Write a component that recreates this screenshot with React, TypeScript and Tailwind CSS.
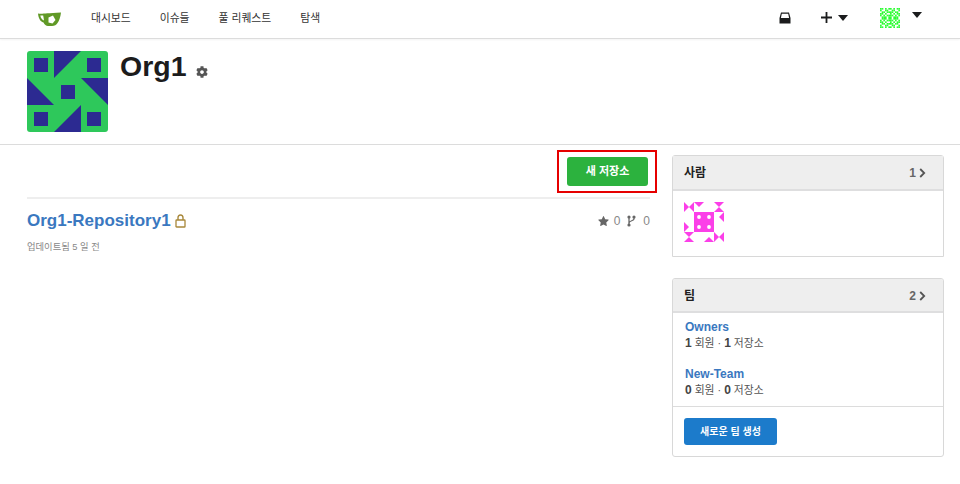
import { GoStarFill } from 'react-icons/go';
import { FaCog } from 'react-icons/fa';

const font = "font-['Liberation_Sans','Noto_Sans_CJK_KR',sans-serif]";

const navItems = ['대시보드', '이슈들', '풀 리퀘스트', '탐색'];

function Logo() {
  return (
    <svg width="23" height="14" viewBox="0 0 23 14">
      <path d="M0 1.5 C4 2 6 1.5 23 0.5 C22.5 5 21 9 19.5 11 C18.5 13 16.5 14 14 14 L10 14 C8 14 6.5 12.5 5.5 10.5 C2 9.5 0.5 6 0 1.5Z" fill="#609926" />
      <path d="M2.3 3.6 L5.2 3.6 L6 8.6 C3.8 7.8 2.8 6 2.3 3.6Z" fill="#fff" />
      <path d="M10.5 5.5 L15 3.5 L17.5 8 L14.5 11.5 L10.5 10.5Z" fill="#fff" />
    </svg>
  );
}

function InboxIcon() {
  return (
    <svg width="12" height="12" viewBox="0 0 12 12">
      <path d="M2 0.6 H10 L11.5 6 V11.4 H0.5 V6Z M2.8 1.8 L1.9 6 H10.1 L9.2 1.8Z" fill="#1b1c1d" fillRule="evenodd" />
    </svg>
  );
}

function Caret({ className }: { className: string }) {
  return (
    <svg className={className} width="10" height="6" viewBox="0 0 10 6">
      <path d="M0 0 H10 L5 6Z" fill="#1b1c1d" />
    </svg>
  );
}

function OrgAvatar() {
  const squares = [[7, 7], [60, 7], [34, 34], [7, 61], [60, 61]];
  return (
    <svg className="rounded-[3px] shrink-0" width="81" height="81" viewBox="0 0 81 81">
      <rect width="81" height="81" fill="#2ec85b" />
      {squares.map(([x, y]) => (
        <rect key={`${x}-${y}`} x={x} y={y} width="14" height="14" fill="#2c2a91" />
      ))}
      <path d="M27 0 H54 L27 27Z M54 27 H81 V54Z M54 54 V81 H27Z M0 27 L27 54 H0Z" fill="#2c2a91" />
    </svg>
  );
}

function UserAvatar() {
  const dots = [[15, 15], [25, 15], [15, 25], [25, 25]];
  const triangles = [
    '0,0 5,5 0,10', '10,0 5,5 10,10',
    '10,0 20,0 15,5',
    '30,0 40,0 35,5', '30,10 40,10 35,5',
    '40,10 40,20 35,15',
    '40,30 35,35 40,40', '30,30 35,35 30,40',
    '30,40 20,40 25,35',
    '0,30 10,30 5,35', '0,40 10,40 5,35',
    '0,30 0,20 5,25',
  ];
  return (
    <svg width="40" height="40" viewBox="0 0 40 40">
      <rect x="10" y="10" width="20" height="20" fill="#fb3fe8" />
      {triangles.map((points) => (
        <polygon key={points} points={points} fill="#fb3fe8" />
      ))}
      {dots.map(([x, y]) => (
        <circle key={`${x}-${y}`} cx={x} cy={y} r="1.9" fill="#fff" />
      ))}
    </svg>
  );
}

function NavAvatar() {
  // 12x12 mirrored noise
  const rows = ['110101101011', '100110011001', '011011110110', '110100101011', '101011110101', '011101101110'];
  const cells: [number, number][] = [];
  rows.forEach((row, y) => {
    row.split('').forEach((c, x) => {
      if (c === '1') {
        cells.push([x, y], [x, 11 - y]);
      }
    });
  });
  return (
    <svg className="block" width="20" height="20" viewBox="0 0 12 12">
      {cells.map(([x, y]) => (
        <rect key={`${x}-${y}`} x={x} y={y} width="1" height="1" fill="#2dfc34" />
      ))}
    </svg>
  );
}

function Chevron() {
  return (
    <svg width="7" height="10" viewBox="0 0 7 10">
      <path d="M1.2 1 L5.2 5 L1.2 9" fill="none" stroke="#555" strokeWidth="1.8" />
    </svg>
  );
}

function LockIcon() {
  return (
    <svg width="11" height="14" viewBox="0 0 11 14">
      <path d="M3 6 V3.8 C3 2.2 4 1 5.5 1 C7 1 8 2.2 8 3.8 V6" fill="none" stroke="#a8883a" strokeWidth="1.4" />
      <rect x="1" y="6" width="9" height="7" rx="0.6" fill="#fff" stroke="#a8883a" strokeWidth="1.3" />
    </svg>
  );
}

function ForkIcon() {
  return (
    <svg width="9" height="12" viewBox="0 0 9 12">
      <path d="M2 2 V10 M7 2 V4 C7 6 2 5.5 2 8" fill="none" stroke="#666" strokeWidth="1.3" />
      <circle cx="2" cy="2" r="1.6" fill="#666" />
      <circle cx="7" cy="2" r="1.6" fill="#666" />
      <circle cx="2" cy="10" r="1.6" fill="#666" />
    </svg>
  );
}

function BoxHeader({ title, count, className }: { title: string; count: number; className: string }) {
  return (
    <div className={`flex justify-between items-center pt-[1px] pl-[11px] pr-[17px] bg-[#eeeeee] border-b-2 border-[#dededf] ${className}`}>
      <span className="text-[12px] font-bold text-[#212121]">{title}</span>
      <span className="flex items-center gap-[3px] text-[12px] font-bold text-[#666]">
        {count}
        <Chevron />
      </span>
    </div>
  );
}

function TeamRow({ name, members, repos }: { name: string; members: number; repos: number }) {
  return (
    <div>
      <div className="text-[12px] font-bold text-[#3a78c0] leading-[17px]">{name}</div>
      <div className="text-[10.8px] text-[#555] leading-[15px]">
        <b className="font-bold text-[12px] text-[#444]">{members}</b> 회원 · <b className="font-bold text-[12px] text-[#444]">{repos}</b> 저장소
      </div>
    </div>
  );
}

export default function App() {
  return (
    <div className={`${font} w-[960px] h-[484px] overflow-hidden bg-white text-[#212121]`}>
      <nav className="h-[39px] flex items-center border-b border-[#dcdcdc] shadow-[0_1px_2px_rgba(0,0,0,0.05)] pl-[38px] pr-[38px] text-[10.8px] text-[#333]">
        <Logo />
        {navItems.map((label, i) => (
          <a key={label} className={i === 0 ? 'ml-[30px] -mt-[1px]' : 'ml-[29px] -mt-[1px]'}>{label}</a>
        ))}
        <div className="ml-auto flex items-center -mt-[3px]">
          <InboxIcon />
          <svg width="11" height="11" viewBox="0 0 11 11" className="block ml-[30px]">
            <path d="M4.6 0 H6.4 V4.6 H11 V6.4 H6.4 V11 H4.6 V6.4 H0 V4.6 H4.6Z" fill="#1b1c1d" />
          </svg>
          <Caret className="ml-[6px]" />
          <span className="ml-[32px]"><NavAvatar /></span>
          <Caret className="ml-[12px] -mt-[6px]" />
        </div>
      </nav>

      <header className="h-[106px] border-b border-[#dcdcdc] pl-[27px] pt-[12px] flex">
        <OrgAvatar />
        <div className="ml-[12px] flex items-start">
          <h1 className="text-[28.5px] font-bold leading-[32px] -mt-[1px] text-[#1c1c1c]">Org1</h1>
          <FaCog className="ml-[9px] mt-[15px] text-[#555]" size={12} />
        </div>
      </header>

      <main className="flex pl-[27px] pr-[16px]">
        <section className="w-[623px]">
          <div className="relative h-[54px] border-b-2 border-[#eeeeee]">
            <div className="absolute right-[2px] top-[12px] w-[81px] h-[29px] rounded-[3px] bg-[#2cb23e] text-white text-[11px] font-bold flex items-center justify-center">
              새 저장소
            </div>
            <div className="absolute right-[-7px] top-[5px] w-[100px] h-[43px] border-2 border-[#e60000]" />
          </div>
          <div className="flex justify-between pt-[12px]">
            <div className="flex items-center gap-[4px]">
              <span className="text-[17px] leading-[20px] font-bold text-[#3a78c0]">Org1-Repository1</span>
              <LockIcon />
            </div>
            <div className="flex items-center text-[12px] text-[#888] h-[20px]">
              <GoStarFill size={11} className="text-[#666]" />
              <span className="ml-[5px]">0</span>
              <span className="ml-[7px]"><ForkIcon /></span>
              <span className="ml-[7px]">0</span>
            </div>
          </div>
          <div className="mt-[10px] text-[9.3px] leading-[12px] text-[#888]">업데이트됨 5 일 전</div>
        </section>

        <aside className="ml-[22px] w-[272px] pt-[10px]">
          <div className="h-[102px] border border-[#d8d8d8] rounded-t-[3px]">
            <BoxHeader title="사람" count={1} className="h-[35px]" />
            <div className="pl-[11px] pt-[11px]">
              <UserAvatar />
            </div>
          </div>
          <div className="mt-[21px] border border-[#d8d8d8] rounded-[3px] overflow-hidden">
            <BoxHeader title="팀" count={2} className="h-[34px]" />
            <div className="px-[12px] pt-[6px] pb-[8px] flex flex-col gap-[15px] border-b border-[#dcdcdc]">
              <TeamRow name="Owners" members={1} repos={1} />
              <TeamRow name="New-Team" members={0} repos={0} />
            </div>
            <div className="p-[11px]">
              <div className="w-[93px] h-[27px] rounded-[3px] bg-[#1c7bcb] text-white text-[10px] font-bold flex items-center justify-center">
                새로운 팀 생성
              </div>
            </div>
          </div>
        </aside>
      </main>
    </div>
  );
}
